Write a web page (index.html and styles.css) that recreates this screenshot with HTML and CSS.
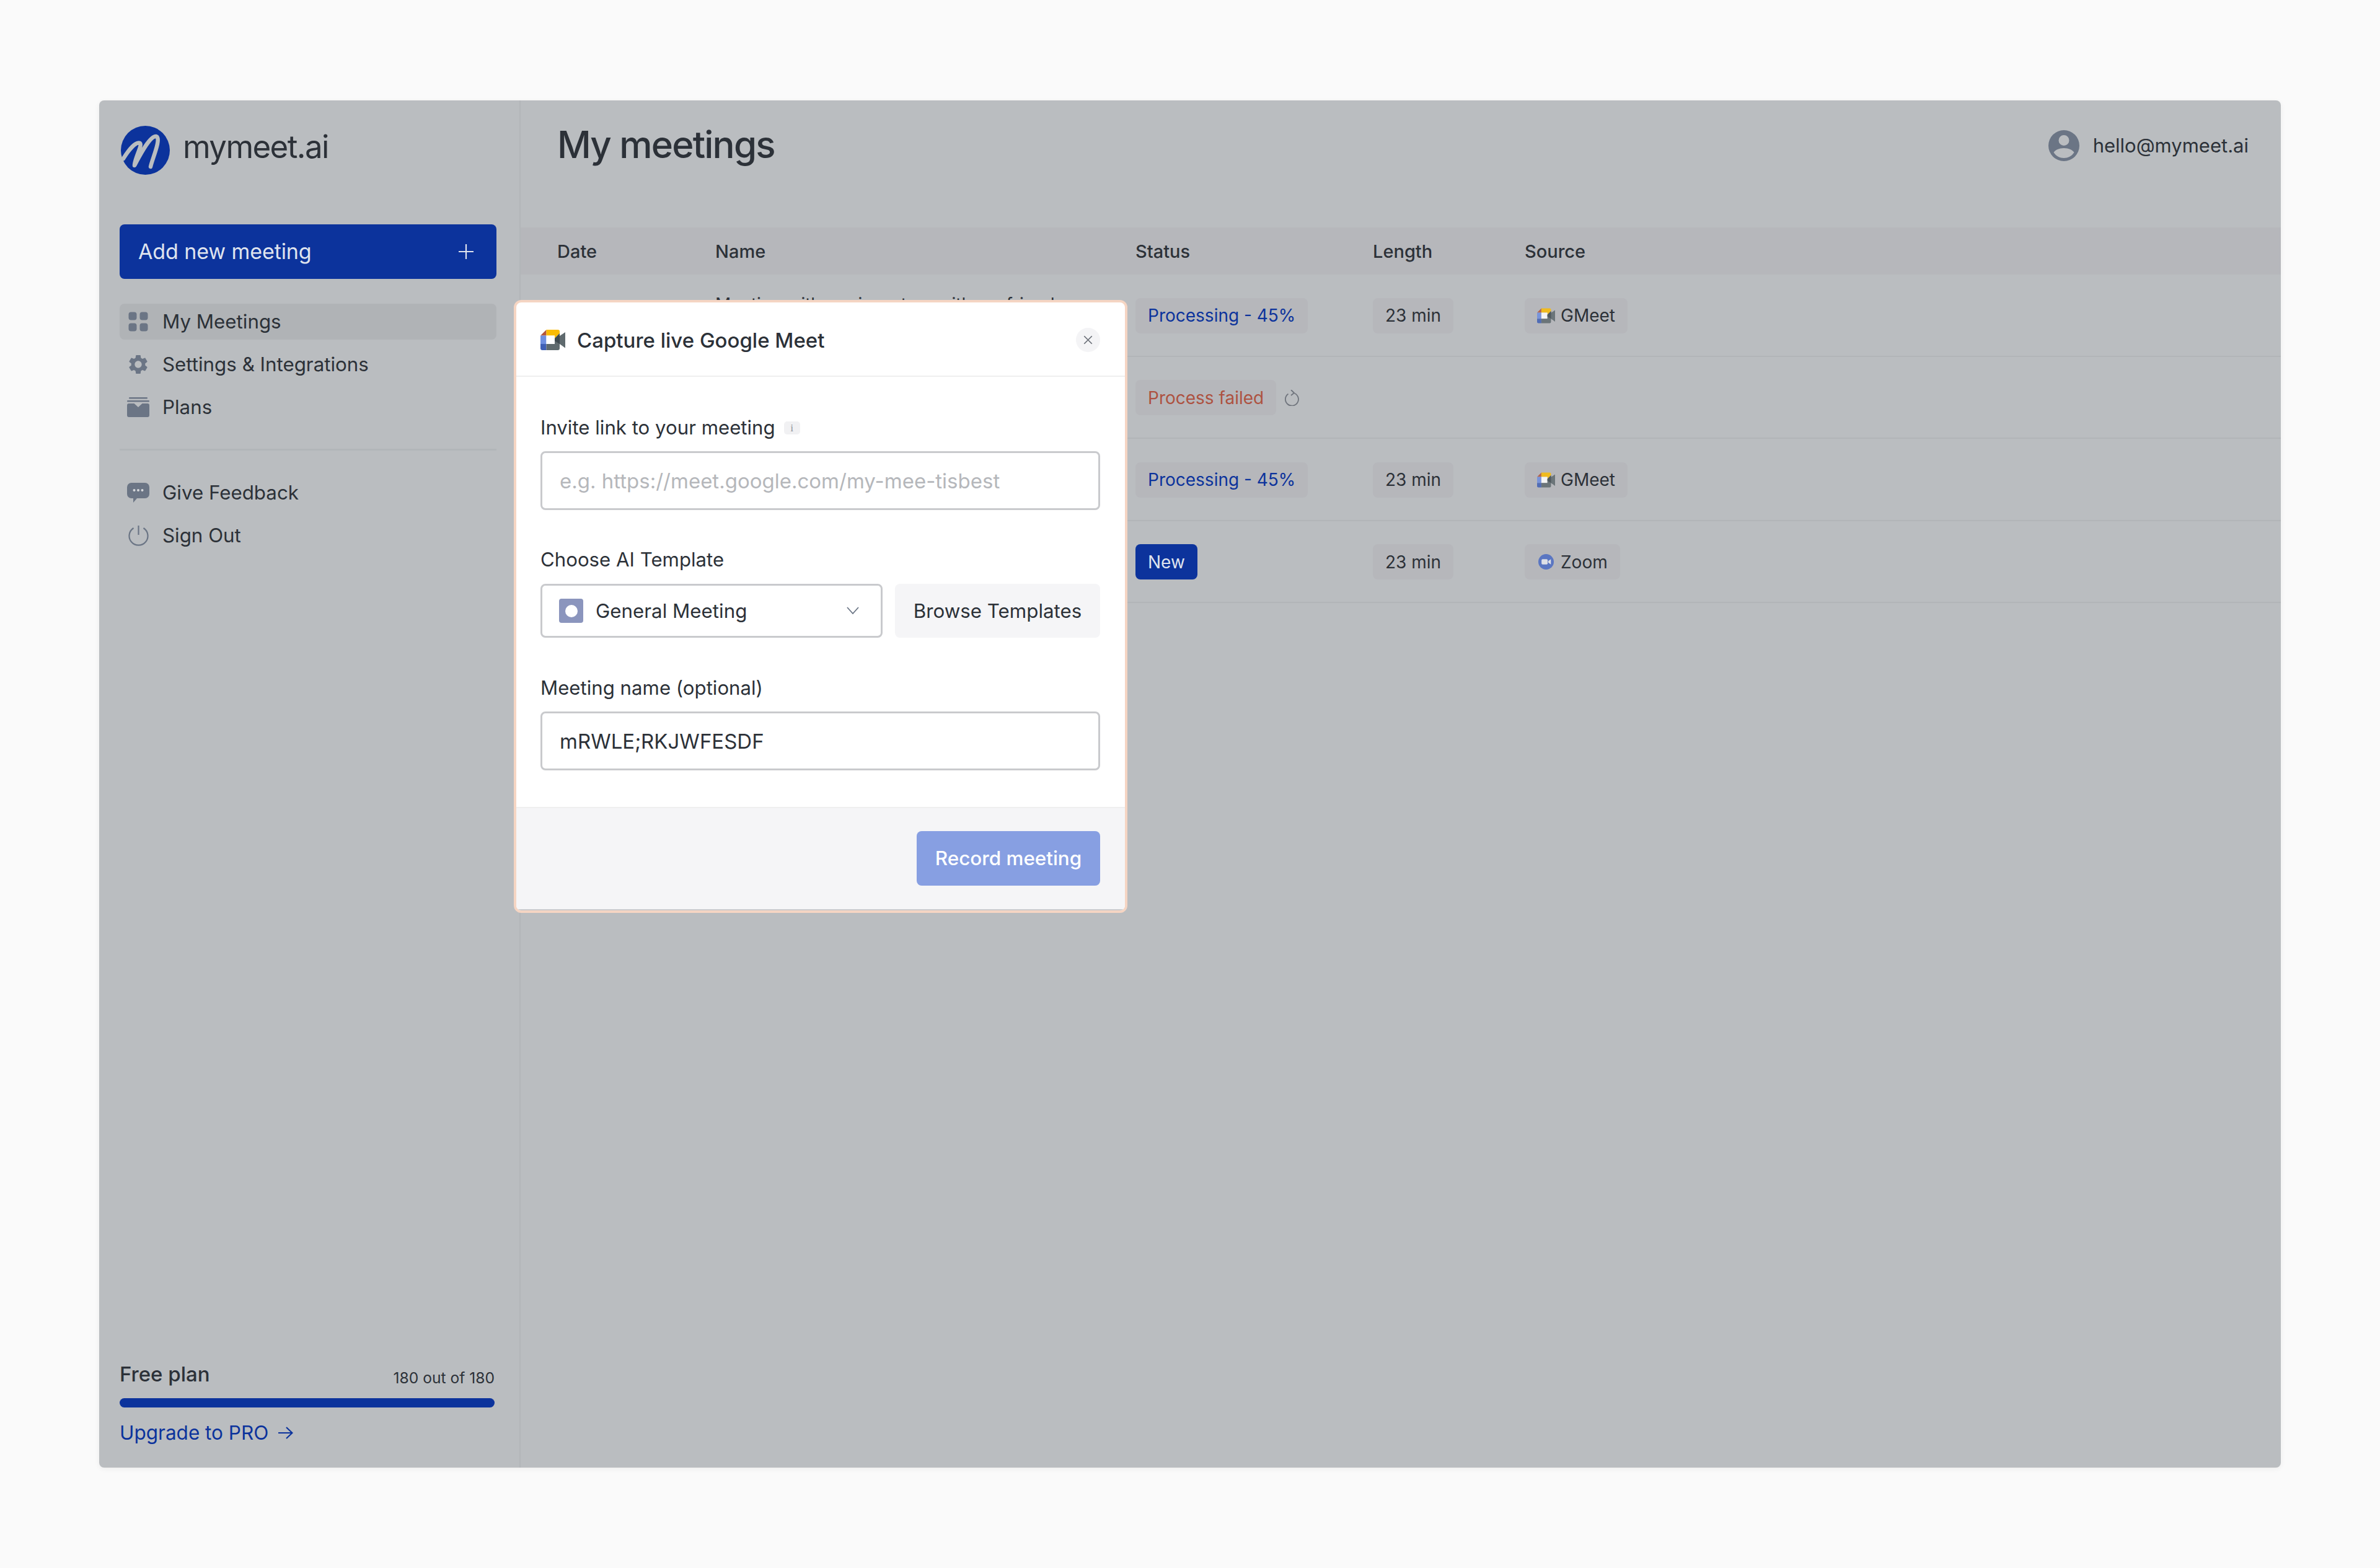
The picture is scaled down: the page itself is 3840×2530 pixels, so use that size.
FILE: index.html
```html
<!DOCTYPE html>
<html lang="en">
<head>
<meta charset="utf-8">
<title>mymeet.ai</title>
<link rel="stylesheet" href="styles.css">
</head>
<body>
<svg class="defs" width="0" height="0" aria-hidden="true">
  <symbol id="meet" viewBox="0 0 40 33">
    <path fill="#b4563a" d="M9.500 0 0 9.500h9.500z"/>
    <path fill="#fbbc04" d="M9.500 0H28a3 3 0 0 1 3 3v3l-8 8V9.500H9.500z"/>
    <path fill="#6f8fe0" d="M0 9.500h9.500V23H0z"/>
    <path fill="#3f5fb5" d="M0 23h9.500v10H3a3 3 0 0 1-3-3z"/>
    <path fill="#fff" d="M9.500 9.500H23V23H9.500z"/>
    <path fill="#5f6a6e" d="M9.500 23H23v-9l8-8v4l9-6v25.500L31 23v7a3 3 0 0 1-3 3H9.500z"/>
    <path fill="#3f4a50" d="M23 14l8-8v17l-8-5z"/>
  </symbol>
</svg>
<div class="frame">
  <aside class="sidebar">
    <div class="brand">
      <svg class="brand-logo" viewBox="0 0 79 79"><circle cx="39.500" cy="39.500" r="39.500" fill="#0c339c"/><path d="M4 53C12 40 24 25 31 28C35 31 22 53 22 64C32 45 47 16 57 17C66 20 50 55 48 66" fill="none" stroke="#babdc0" stroke-width="6.500" stroke-linecap="round" stroke-linejoin="round"/></svg>
      <span class="brand-name">mymeet.ai</span>
    </div>
    <button class="add-btn"><span>Add new meeting</span><svg class="add-plus" viewBox="0 0 24 24"><path d="M12 0v24M0 12h24" stroke="#dfe3ee" stroke-width="2.200" fill="none"/></svg></button>
    <nav class="nav">
      <a class="nav-item active"><span class="nav-ico"><svg viewBox="0 0 32 32" class="ico"><rect x="0.500" y="0.500" width="13" height="13" rx="4"/><rect x="18.500" y="0.500" width="13" height="13" rx="4"/><rect x="0.500" y="18.500" width="13" height="13" rx="4"/><rect x="18.500" y="18.500" width="13" height="13" rx="4"/></svg></span>My Meetings</a>
      <a class="nav-item"><span class="nav-ico"><svg viewBox="2.200 1.800 19.600 20.400" class="ico"><path d="M19.140 12.940c.04-.3.06-.61.06-.94 0-.32-.02-.64-.07-.94l2.030-1.580c.18-.14.23-.41.12-.61l-1.920-3.320c-.12-.22-.37-.29-.59-.22l-2.390.96c-.5-.38-1.030-.7-1.620-.94l-.36-2.540c-.04-.24-.24-.41-.48-.41h-3.840c-.24 0-.43.17-.47.41l-.36 2.540c-.59.24-1.130.57-1.620.94l-2.390-.96c-.22-.08-.47 0-.59.22L2.740 8.870c-.12.21-.08.47.12.61l2.030 1.580c-.05.3-.09.63-.09.94s.02.64.07.94l-2.030 1.580c-.18.14-.23.41-.12.61l1.920 3.320c.12.22.37.29.59.22l2.390-.96c.5.38 1.030.7 1.620.94l.36 2.540c.05.24.24.41.48.41h3.840c.24 0 .44-.17.47-.41l.36-2.540c.59-.24 1.130-.56 1.620-.94l2.390.96c.22.08.47 0 .59-.22l1.920-3.320c.12-.22.07-.47-.12-.61l-2.010-1.580zM12 15.600c-1.980 0-3.600-1.620-3.600-3.600s1.620-3.600 3.600-3.600 3.600 1.620 3.600 3.600-1.620 3.600-3.600 3.600z"/></svg></span>Settings &amp; Integrations</a>
      <a class="nav-item"><span class="nav-ico"><svg viewBox="0 0 36 32" class="ico ico-wide"><rect x="3" y="0" width="30" height="2.500" rx="1.200"/><rect x="0" y="5" width="36" height="2.500" rx="1.200"/><path d="M3 10h8.500L18 16l6.500-6H33a3 3 0 0 1 3 3v16a3 3 0 0 1-3 3H3a3 3 0 0 1-3-3V13a3 3 0 0 1 3-3z"/></svg></span>Plans</a>
      <div class="nav-sep"></div>
      <a class="nav-item"><span class="nav-ico"><svg viewBox="0 0 36 32" class="ico ico-wide"><path d="M7 0h22a7 7 0 0 1 7 7v11a7 7 0 0 1-7 7H16l-6 7v-7H7a7 7 0 0 1-7-7V7a7 7 0 0 1 7-7z"/><circle cx="11.500" cy="12" r="2" fill="#d6d8dc"/><circle cx="18" cy="12" r="2" fill="#d6d8dc"/><circle cx="24.500" cy="12" r="2" fill="#d6d8dc"/></svg></span>Give Feedback</a>
      <a class="nav-item"><span class="nav-ico"><svg viewBox="0 0 32 33" class="ico-line"><path d="M16 0v15M8 4a15 15 0 1 0 16 0"/></svg></span>Sign Out</a>
    </nav>
    <div class="plan">
      <div class="plan-head"><span class="plan-name">Free plan</span><span class="plan-count">180 out of 180</span></div>
      <div class="plan-bar"></div>
      <a class="upgrade">Upgrade to PRO<svg class="upgrade-arrow" viewBox="0 0 24 20"><path d="M0 10h22M13 1l9.500 9-9.500 9" fill="none" stroke="#0c339c" stroke-width="2.200"/></svg></a>
    </div>
  </aside>
  <main class="main">
    <header class="topbar">
      <h1 class="title">My meetings</h1>
      <div class="user">
        <svg class="user-ico" viewBox="0 0 50 50"><path fill="#6b7585" fill-rule="evenodd" d="M25 0a25 25 0 1 1 0 50a25 25 0 0 1 0-50zM25 8a8.500 8.500 0 1 0 0 17a8.500 8.500 0 0 0 0-17zM25 29c-8 0-14 3-16.500 7c4 6 10 9 16.500 9s12.500-3 16.500-9c-2.500-4-8.500-7-16.500-7z"/></svg>
        <span>hello@mymeet.ai</span>
      </div>
    </header>
    <div class="thead">
      <span>Date</span><span>Name</span><span>Status</span><span>Length</span><span>Source</span>
    </div>
    <div class="row">
      <span></span>
      <span class="name">Meeting with our investors with my friend</span>
      <span><span class="pill pill-blue">Processing - 45%</span></span>
      <span><span class="pill">23 min</span></span>
      <span><span class="pill"><svg class="src-ico"><use href="#meet"/></svg>GMeet</span></span>
    </div>
    <div class="row">
      <span></span><span></span>
      <span class="status-cell"><span class="pill pill-red">Process failed</span><svg class="retry" viewBox="0 0 24 26"><path d="M6.500 6.500A10.500 10.500 0 1 0 15 5M11 0l5 5-5 4" fill="none" stroke="#6f747c" stroke-width="1.800"/></svg></span>
      <span></span><span></span>
    </div>
    <div class="row">
      <span></span><span></span>
      <span><span class="pill pill-blue">Processing - 45%</span></span>
      <span><span class="pill">23 min</span></span>
      <span><span class="pill"><svg class="src-ico"><use href="#meet"/></svg>GMeet</span></span>
    </div>
    <div class="row">
      <span></span><span></span>
      <span><span class="pill pill-new">New</span></span>
      <span><span class="pill">23 min</span></span>
      <span><span class="pill"><svg class="src-ico" viewBox="0 0 29 29"><circle cx="14.500" cy="14.500" r="14.500" fill="#4a6bc4"/><rect x="6" y="9.500" width="11.500" height="10" rx="2" fill="#e6e8ee"/><path d="M18.500 13l5-3.500v10l-5-3.500z" fill="#e6e8ee"/></svg>Zoom</span></span>
    </div>
  </main>
  <section class="modal">
    <div class="modal-head">
      <svg class="modal-ico"><use href="#meet"/></svg>
      <h2 class="modal-title">Capture live Google Meet</h2>
      <button class="modal-close"><svg viewBox="0 0 12 12"><path d="M1 1l10 10M11 1L1 11" stroke="#6b7078" stroke-width="1.400" fill="none"/></svg></button>
    </div>
    <div class="modal-body">
      <label class="field-label">Invite link to your meeting<span class="info">i</span></label>
      <input class="input" placeholder="e.g. https://meet.google.com/my-mee-tisbest">
      <label class="field-label field-gap">Choose AI Template</label>
      <div class="tpl-row">
        <div class="select"><span class="tpl-ico"></span><span class="tpl-text">General Meeting</span><svg class="chev" viewBox="0 0 20 12"><path d="M1 1l9 10 9-10" fill="none" stroke="#6b7585" stroke-width="1.800"/></svg></div>
        <button class="browse">Browse Templates</button>
      </div>
      <label class="field-label field-gap field-gap-wide">Meeting name (optional)</label>
      <input class="input" value="mRWLE;RKJWFESDF">
    </div>
    <div class="modal-foot"><button class="record">Record meeting</button></div>
  </section>
</div>
</body>
</html>
```

FILE: styles.css
```css
* { box-sizing: border-box; }
html, body { margin: 0; padding: 0; }
body {
  background: #fafafa;
  font-family: Inter, "Liberation Sans", sans-serif;
  color: #2c3138;
  padding: 162px 160px;
  height: 2530px;
  overflow: hidden;
}
.defs { position: absolute; }
.frame {
  position: relative;
  display: flex;
  width: 3520px;
  height: 2206px;
  background: #babdc0;
  border-radius: 8px;
  box-shadow: 0 2px 8px rgba(0, 0, 0, .06);
}
.sidebar {
  width: 680px;
  flex: none;
  display: flex;
  flex-direction: column;
  padding: 41px 37px 34px 33px;
  border-right: 2px solid #b2b6b9;
}
.brand { display: flex; align-items: center; gap: 21px; height: 79px; }
.brand-logo { width: 79px; height: 79px; flex: none; margin-left: 2px; }
.brand-name { font-size: 51px; letter-spacing: -1.6px; line-height: 60px; margin-top: -12px; color: #2c3138; }
.add-btn {
  margin-top: 80px;
  height: 88px;
  border: 0;
  border-radius: 8px;
  background: #0c339c;
  color: #dfe3ee;
  font: 400 34px/44px Inter, sans-serif;
  letter-spacing: -0.1px;
  display: flex;
  align-items: center;
  justify-content: space-between;
  padding: 0 37px 0 30px;
}
.add-plus { width: 24px; height: 24px; }
.nav { margin-top: 40px; display: flex; flex-direction: column; gap: 11px; }
.nav-item {
  height: 58px;
  display: flex;
  align-items: center;
  border-radius: 8px;
  font-size: 31.3px;
  padding-left: 12px;
  gap: 27px;
}
.nav-item.active { background: #b0b3b6; }
.nav-ico { width: 36px; height: 36px; display: flex; align-items: center; justify-content: center; flex: none; margin-right: -6px; }
.ico { width: 32px; height: 32px; fill: #6b7585; }
.ico-wide { width: 36px; }
.ico-line { width: 33px; height: 33px; fill: none; stroke: #6b7585; stroke-width: 2.200; }
.nav-sep { height: 3px; background: #b2b6b9; margin: 27px 0 28px; }
.plan { margin-top: auto; }
.plan-head { display: flex; justify-content: space-between; align-items: center; padding-right: 3px; }
.plan-name { font-size: 33px; line-height: 44px; font-weight: 500; }
.plan-count { font-size: 24.6px; margin-top: 12px; }
.plan-bar { height: 15px; margin: 17px 3px 19px 0; border-radius: 8px; background: #0c339c; }
.upgrade { display: flex; align-items: center; gap: 16px; font-size: 31.5px; line-height: 44px; color: #0c339c; }
.upgrade-arrow { width: 24px; height: 20px; }
.main { flex: 1; min-width: 0; }
.topbar { height: 205px; display: flex; justify-content: space-between; padding: 28px 52px 0 59px; }
.title { margin: 0; font-size: 60px; letter-spacing: -1.8px; line-height: 86px; font-weight: 500; }
.user { display: flex; align-items: flex-start; gap: 22px; font-size: 31px; padding-top: 20px; }
.user span { line-height: 50px; }
.user-ico { width: 50px; height: 50px; }
.thead, .row { display: grid; grid-template-columns: 255px 678px 383px 245px 1fr; padding-left: 59px; }
.thead { height: 76px; align-items: center; background: #b6b7bb; font-size: 29px; font-weight: 500; }
.row { height: 132.5px; padding-top: 2px; align-items: center; border-bottom: 2px solid #b2b5b8; }
.name { align-self: start; padding-top: 24px; font-size: 28px; white-space: nowrap; line-height: 44px; }
.pill {
  display: inline-flex;
  align-items: center;
  height: 57px;
  padding: 0 20px;
  border-radius: 8px;
  background: #b6b7bb;
  font-size: 28px;
  vertical-align: middle;
}
.pill-blue { color: #0c339c; }
.pill-red { color: #ad5241; }
.pill-new { background: #0c339c; color: #dfe3ee; }
.status-cell { display: flex; align-items: center; gap: 13px; }
.retry { width: 24px; height: 26px; }
.src-ico { width: 29px; height: 25px; margin-right: 9px; opacity: .85; }
.modal {
  position: absolute;
  left: 669px;
  top: 322px;
  width: 990px;
  height: 989px;
  border: 4px solid #f5d5c3;
  border-radius: 12px;
  background: #fff;
  display: flex;
  flex-direction: column;
  overflow: hidden;
}
.modal-head { height: 120px; flex: none; display: flex; align-items: center; padding: 0 40px 0 39px; border-bottom: 2px solid #efefef; }
.modal-ico { width: 40px; height: 33px; flex: none; margin-top: 2px; }
.modal-title { margin: 4px 0 0 19px; font-size: 33px; font-weight: 500; line-height: 44px; flex: 1; }
.modal-close { width: 39px; height: 39px; border: 0; padding: 12px; border-radius: 50%; background: #f4f4f6; margin-top: 2px; display: flex; }
.modal-body { flex: 1; padding: 60px 40px 0 39px; }
.field-label { display: flex; align-items: center; font-size: 31.2px; line-height: 44px; height: 44px; margin-bottom: 16px; }
.field-gap { margin-top: 58px; }
.field-gap-wide { margin-top: 59px; }
.info { width: 26px; height: 21px; margin-left: 14px; border-radius: 5px; background: #f1f1f3; color: #8b8e94; font: 16px/21px "Liberation Serif", serif; text-align: center; }
.input {
  display: block;
  width: 100%;
  height: 95px;
  border: 3px solid #c9cacd;
  border-radius: 8px;
  padding: 0 28px;
  background: #fff;
  color: #2c3138;
  font: 400 33px Inter, sans-serif;
  outline: none;
}
.input::placeholder { color: #b5b7bb; opacity: 1; }
.tpl-row { display: flex; gap: 20px; margin-top: 17px; }
.select {
  width: 552px;
  height: 87px;
  border: 3px solid #c9cacd;
  border-radius: 8px;
  display: flex;
  align-items: center;
  padding: 0 35px 0 27px;
  font-size: 31.3px;
}
.tpl-ico { width: 39px; height: 39px; border-radius: 4px; background: #8b95bd; display: flex; align-items: center; justify-content: center; position: relative; flex: none; }
.tpl-ico::after { content: ""; width: 20px; height: 20px; border-radius: 50%; background: #fff; }
.tpl-text { margin-left: 20px; flex: 1; }
.chev { width: 20px; height: 12px; margin-bottom: 2px; }
.browse { flex: 1; height: 87px; border: 0; border-radius: 8px; background: #f5f5f7; color: #2c3138; font: 400 31.3px Inter, sans-serif; padding: 0; }
.modal-foot { height: 167px; flex: none; display: flex; justify-content: flex-end; align-items: flex-start; padding: 37px 40px 0 0; background: #f5f5f7; border-top: 2px solid #efefef; border-bottom: 2px solid #c9cacd; }
.record { width: 296px; height: 88px; border: 0; border-radius: 8px; background: #879fe2; color: #fff; font: 500 31.4px Inter, sans-serif; padding: 0; }
```
